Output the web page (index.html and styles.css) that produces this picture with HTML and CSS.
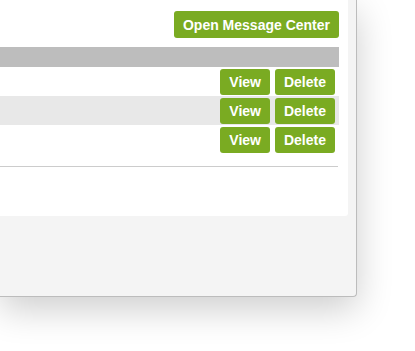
FILE: index.html
```html
<!DOCTYPE html>
<html lang="en">
<head>
    <meta charset="UTF-8">
    <meta name="viewport" content="width=device-width, initial-scale=1.0">
    <title>Messages</title>
    <link rel="stylesheet" href="styles.css">
</head>
<body>
    <div class="dialog">
        <div class="panel">
            <div class="toolbar">
                <button class="button">Open Message Center</button>
            </div>
            <div class="table-head"></div>
            <div class="rows">
                <div class="row">
                    <button class="button">View</button>
                    <button class="button">Delete</button>
                </div>
                <div class="row alt">
                    <button class="button">View</button>
                    <button class="button">Delete</button>
                </div>
                <div class="row">
                    <button class="button">View</button>
                    <button class="button">Delete</button>
                </div>
            </div>
            <div class="divider"></div>
        </div>
    </div>
</body>
</html>
```

FILE: styles.css
```css
/* General */
body {
    font-family: "Liberation Sans", Arial, sans-serif;
    margin: 0;
    padding: 0;
    min-height: 351px;
    background-color: white;
}
/* Dialog frame */
.dialog {
    box-sizing: border-box;
    width: 357px;
    background-color: #f4f4f4;
    border-right: 1px solid #bcbcbc;
    border-bottom: 1px solid #bcbcbc;
    border-bottom-right-radius: 4px;
    padding: 0 8px 80px 0;
    box-shadow: 0 12px 36px rgba(0, 0, 0, 0.2);
}
.panel {
    background-color: white;
    border-bottom-right-radius: 3px;
    padding: 11px 9px 49px 0;
}
.toolbar {
    display: flex;
    justify-content: flex-end;
}
/* Buttons */
.button {
    background-color: #7aab22;
    color: white;
    border: none;
    font-family: inherit;
    font-weight: bold;
    font-size: 14px;
    height: 27px;
    padding: 0 9px;
    border-radius: 3px;
    cursor: pointer;
}
.button:hover {
    background-color: #6c9a1c;
}
/* Table */
.table-head {
    height: 20px;
    margin-top: 9px;
    background-color: #bdbdbd;
}
.row {
    display: flex;
    justify-content: flex-end;
    align-items: center;
    gap: 5px;
    height: 29px;
    padding-right: 4px;
}
.row .button {
    height: 26px;
}
.row.alt {
    background-color: #e8e8e8;
}
.divider {
    height: 1px;
    margin-top: 12px;
    margin-right: 1px;
    background-color: #cccccc;
}
```
